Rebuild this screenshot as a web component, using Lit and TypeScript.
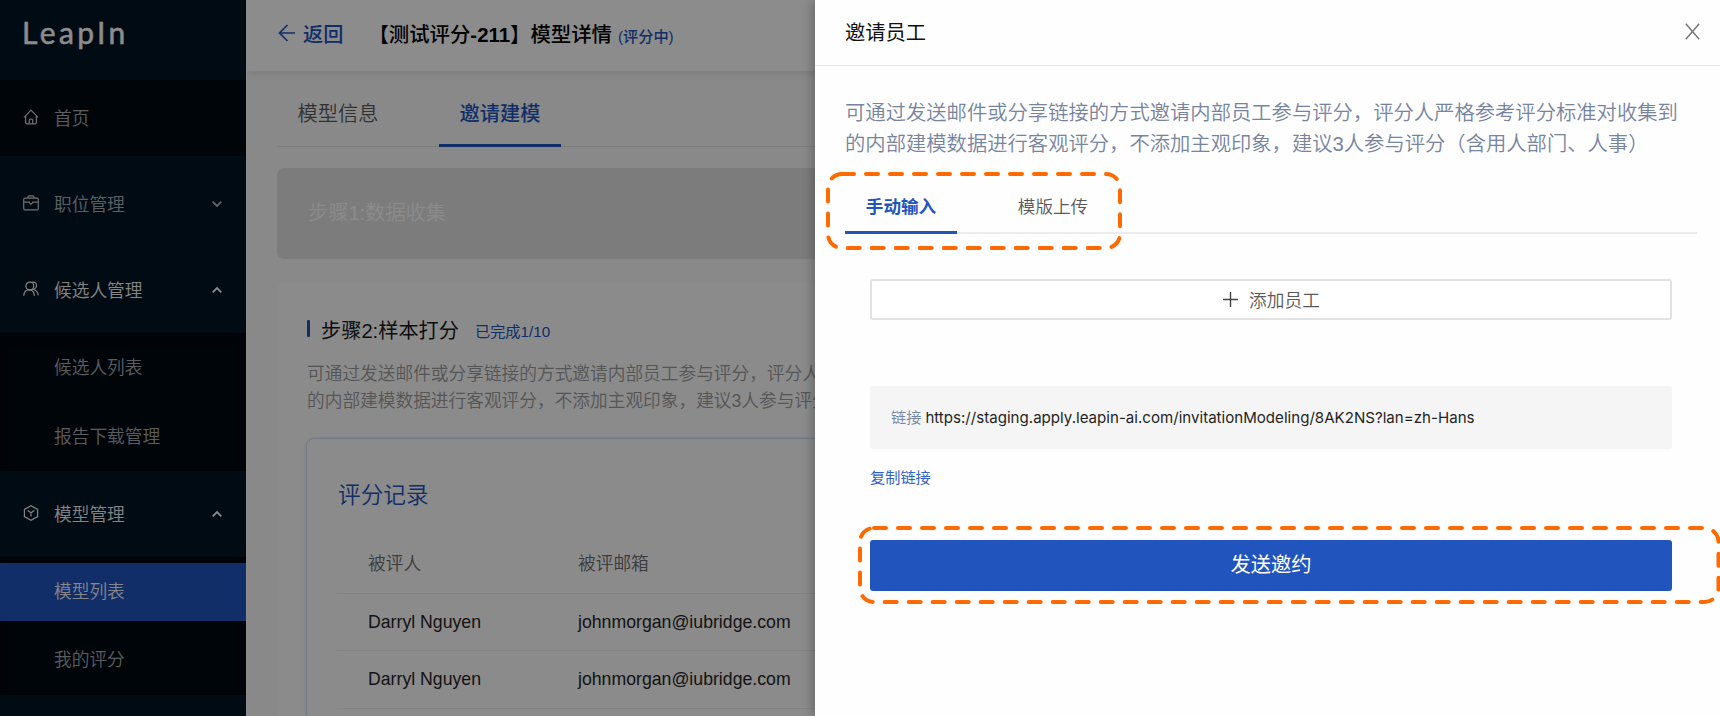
import { LitElement, html, css, svg } from "lit";
import { customElement } from "lit/decorators.js";
import { classMap } from "lit/directives/class-map.js";

const icons = {
  home: svg`<path d="M1 8.4 8 1.2l7 7.2M2.6 7v6.6q0 1.2 1.2 1.2h8.4q1.2 0 1.2-1.2V7M6.3 14.6v-3.4q0-1 1-1h1.4q1 0 1 1v3.4"/>`,
  brief: svg`<rect x=".7" y="3.1" width="14.6" height="11.8" rx="1.4"/><path d="M5 3V1.9Q5 .8 6 .8h4q1 0 1 1.1V3M.8 7.2h5.4M9.8 7.2h5.4M6.2 6.4v1.2L8 9.2l1.8-1.6V6.4"/>`,
  people: svg`<circle cx="6.8" cy="5" r="3.9"/><path d="M.7 14.8C1 11.2 3 8.9 6.3 8.9c3 0 4.700 2.300 5.100 5.900M9 1.300c3-.9 4.800 1.300 4.500 3.700-.2 1.700-1.400 2.900-2.900 3.500 2.700.7 4.300 2.800 4.700 5.800"/>`,
  cube: svg`<path d="M8 .8 14.600 4.400v7.200L8 15.200 1.400 11.600V4.400ZM4.600 5.600 8 7.800l3.400-2.200M8 7.800v3.700"/>`,
};

interface Group {
  icon: keyof typeof icons;
  label: string;
  open: boolean;
  children: string[];
}

const groups: Group[] = [
  { icon: "brief", label: "职位管理", open: false, children: [] },
  { icon: "people", label: "候选人管理", open: true, children: ["候选人列表", "报告下载管理"] },
  { icon: "cube", label: "模型管理", open: true, children: ["模型列表", "我的评分"] },
];

@customElement("side-nav")
export class SideNav extends LitElement {
  static styles = css`
    :host { display: block; width: 246px; flex: none; background: #001523; color: #fff; font-size: 17.7px; overflow: hidden; }
    .logo { height: 80px; box-sizing: border-box; padding: 12px 0 0 22px; font: 400 30px/40px Lato, sans-serif; letter-spacing: 3.4px; color: #fff; -webkit-text-stroke: 0.5px #fff; }
    .item { display: flex; align-items: center; gap: 15px; height: 86px; padding: 0 24px 0 23px; }
    .home { height: 76px; margin-bottom: 5px; background: #000a13; }
    .label { flex: 1; opacity: 0.66; padding-bottom: 2px; }
    .open .label, .open .icon { opacity: 0.95; }
    .icon { width: 16px; height: 16px; margin-bottom: 2px; fill: none; stroke: #fff; stroke-width: 1.2; opacity: 0.8; }
    .arrow { width: 10px; height: 6px; fill: none; stroke: #fff; stroke-width: 1.8; opacity: 0.7; }
    .open .arrow { transform: rotate(180deg); opacity: 1; }
    .sub { display: flex; flex-direction: column; gap: 10px; padding: 6px 0 4.800px; background: #000a13; box-shadow: inset 0 5px 8px -2px rgba(0, 0, 0, 0.6); }
    .leaf { height: 58.500px; line-height: 58.500px; padding-left: 54px; color: rgba(255, 255, 255, 0.66); }
    .on { background: #2155bd; color: rgba(255, 255, 255, 0.95); }
  `;
  render() {
    return html`
      <div class="logo">LeapIn</div>
      <div class="item home"><svg class="icon" viewBox="0 0 16 16">${icons.home}</svg><span class="label">首页</span></div>
      ${groups.map(
        (g) => html`
          <div class=${classMap({ item: true, open: g.open })}>
            <svg class="icon" viewBox="0 0 16 16">${icons[g.icon]}</svg>
            <span class="label">${g.label}</span>
            <svg class="arrow" viewBox="0 0 10 6"><path d="M.7.7 5 5 9.300.7" /></svg>
          </div>
          ${g.children.length
            ? html`<div class="sub">
                ${g.children.map((c) => html`<div class=${classMap({ leaf: true, on: c === "模型列表" })}>${c}</div>`)}
              </div>`
            : ""}
        `
      )}
    `;
  }
}

const people = [
  ["Darryl Nguyen", "johnmorgan@iubridge.com"],
  ["Darryl Nguyen", "johnmorgan@iubridge.com"],
];

@customElement("model-page")
export class ModelPage extends LitElement {
  static styles = css`
    :host { display: block; flex: 1; min-width: 0; background: #f9f9f9; overflow: hidden; border-left: 1px solid #fff; box-sizing: border-box; }
    .head { display: flex; align-items: center; height: 71px; box-sizing: border-box; padding: 0 0 5px 31px; background: #fff; box-shadow: 0 2px 8px rgba(0, 0, 0, 0.1); font-size: 20.2px; white-space: nowrap; }
    .back { display: flex; align-items: center; gap: 7px; color: #2155bd; font-weight: 500; }
    .back svg { width: 18px; height: 18px; fill: none; stroke: #2155bd; stroke-width: 1.7; }
    .title { margin-left: 25px; font-size: 20.4px; font-weight: 500; color: #000; }
    .title b { font-weight: 700; }
    .state { margin: 4px 0 0 6px; font-size: 15.2px; font-weight: 500; color: #2155bd; }
    .body { padding-left: 30px; }
    .tabs { display: flex; height: 75px; border-bottom: 1px solid #e6e6e6; font-size: 20.2px; line-height: 86px; color: #595959; }
    .tab { width: 122px; text-align: center; height: 73px; }
    .tab + .tab { margin-left: 40px; }
    .active { color: #2155bd; font-weight: 500; border-bottom: 3px solid #2155bd; }
    .step1 { margin-top: 21px; height: 91px; line-height: 91px; padding-left: 31px; border-radius: 7px; background: #e2e2e2; color: #fdfdfd; font-size: 20.2px; }
    .card { margin-top: 24px; padding: 33px 0 0 29px; height: 440px; background: #fdfdfd; border-radius: 7px 0 0 0; }
    .step2 { display: flex; align-items: center; height: 26px; margin-bottom: 2px; padding-left: 1px; font-size: 20.2px; font-weight: 400; color: #1a1a1a; }
    .bar { width: 3px; height: 17px; margin: 0 11px 1px 0; border-radius: 1px; background: #2155bd; }
    .done { margin: 2px 0 0 16px; font-size: 15.2px; color: #2155bd; }
    .desc { margin-top: 19px; padding-left: 1px; width: 760px; font-size: 17.7px; line-height: 26.8px; color: #9c9c9c; white-space: nowrap; }
    .records { margin-top: 23px; height: 400px; padding: 32px 0 0 30px; border: 1px solid #cfdcf3; border-radius: 8px; box-shadow: 0 0 3px rgba(33, 85, 189, 0.18); }
    .rtitle { font-size: 22.7px; line-height: 48px; color: #2155bd; padding-left: 1px; }
    .row { display: grid; grid-template-columns: 210px 1fr; padding-left: 31px; height: 56.700px; line-height: 56.700px; border-bottom: 1px solid #efefef; font-size: 17.7px; color: #262626; }
    .th { margin-top: 17px; height: 57px; color: #6c6c6c; }
  `;
  render() {
    return html`
      <div class="head">
        <div class="back"><svg viewBox="0 0 18 18"><path d="M17 9H1.500M9.500 1 1.500 9l8 8" /></svg>返回</div>
        <div class="title">【测试评分<b>-211</b>】模型详情</div>
        <div class="state">(评分中)</div>
      </div>
      <div class="body">
        <div class="tabs"><div class="tab">模型信息</div><div class="tab active">邀请建模</div></div>
        <div class="step1">步骤1:数据收集</div>
        <div class="card">
          <div class="step2"><span class="bar"></span>步骤2:样本打分<span class="done">已完成1/10</span></div>
          <div class="desc">可通过发送邮件或分享链接的方式邀请内部员工参与评分，评分人严格参考评分标准对收集到<br />的内部建模数据进行客观评分，不添加主观印象，建议3人参与评分（含用人部门、人事）</div>
          <div class="records">
            <div class="rtitle">评分记录</div>
            <div class="row th"><span>被评人</span><span>被评邮箱</span></div>
            ${people.map((p) => html`<div class="row"><span>${p[0]}</span><span>${p[1]}</span></div>`)}
          </div>
        </div>
      </div>
    `;
  }
}

@customElement("invite-drawer")
export class InviteDrawer extends LitElement {
  static styles = css`
    :host { display: block; box-sizing: border-box; background: #fefefe; box-shadow: -3px 0 10px rgba(0, 0, 0, 0.24); }
    .head { display: flex; align-items: center; justify-content: space-between; height: 66px; box-sizing: border-box; padding: 0 20px 3px 30px; border-bottom: 1px solid #e6e6e6; font-size: 20.3px; font-weight: 400; color: #111; }
    .head svg { width: 15px; height: 17px; fill: none; stroke: #777; stroke-width: 1.500; }
    .body { padding: 32px 23px 0 30px; }
    .desc { font-size: 20.32px; line-height: 30.500px; color: #76849f; white-space: nowrap; }
    .tabs { display: flex; gap: 40px; height: 55px; margin-top: 20px; border-bottom: 2px solid #ececec; box-sizing: border-box; font-size: 17.6px; line-height: 56px; color: #595959; }
    .tab { width: 112px; height: 52px; text-align: center; }
    .active { color: #2155bd; font-weight: 700; border-bottom: 3px solid #2155bd; }
    .form { padding: 45px 25px 0; }
    .add { display: flex; align-items: center; justify-content: center; gap: 11px; height: 41px; box-sizing: border-box; padding: 0 0 1px 1px; border: 2px solid #e2e2e2; border-radius: 3px; background: #fff; font-size: 17.700px; color: #595959; }
    .add svg { width: 15px; height: 15px; margin-top: 1px; fill: none; stroke: #444; stroke-width: 1.400; }
    .link { margin-top: 66px; height: 63px; line-height: 63px; padding-left: 21px; border-radius: 3px; background: #f5f5f5; font-size: 15.200px; color: #76849f; }
    .url { margin-left: 4px; font-family: Inter, sans-serif; font-weight: 400; font-size: 15.1px; color: #1f1f1f; }
    .copy { margin-top: 17px; line-height: 24px; font-size: 15.200px; font-weight: 400; color: #2f63c8; }
    .send { margin-top: 49.500px; height: 51px; line-height: 51px; border-radius: 3px; background: #2155bd; color: #fff; font-size: 20.300px; font-weight: 400; text-align: center; }
  `;
  render() {
    return html`
      <div class="head">邀请员工<svg viewBox="0 0 15 17"><path d="M.8.8 14.200 16.200M14.200.8.8 16.200" /></svg></div>
      <div class="body">
        <div class="desc">可通过发送邮件或分享链接的方式邀请内部员工参与评分，评分人严格参考评分标准对收集到<br />的内部建模数据进行客观评分，不添加主观印象，建议3人参与评分（含用人部门、人事）</div>
        <div class="tabs"><div class="tab active">手动输入</div><div class="tab">模版上传</div></div>
        <div class="form">
          <div class="add"><svg viewBox="0 0 15 15"><path d="M7.500 0v15M0 7.500h15" /></svg>添加员工</div>
          <div class="link">链接<span class="url">https://staging.apply.leapin-ai.com/invitationModeling/8AK2NS?lan=zh-Hans</span></div>
          <div class="copy">复制链接</div>
          <div class="send">发送邀约</div>
        </div>
      </div>
    `;
  }
}

@customElement("app-root")
export class AppRoot extends LitElement {
  static styles = css`
    :host { display: block; position: relative; width: 1720px; height: 716px; overflow: hidden; font-family: "Liberation Sans", "Noto Sans CJK SC", sans-serif; font-weight: 350; }
    .page { display: flex; height: 716px; }
    .mask { position: absolute; inset: 0; background: rgba(0, 0, 0, 0.45); }
    .drawer { position: absolute; top: 0; right: 0; bottom: 0; width: 905px; }
    .marks { position: absolute; inset: 0; width: 1720px; height: 716px; fill: none; stroke: #ff6a00; stroke-width: 4; stroke-dasharray: 12 12; stroke-linecap: round; }
  `;
  render() {
    return html`
      <div class="page"><side-nav></side-nav><model-page></model-page></div>
      <div class="mask"></div>
      <invite-drawer class="drawer"></invite-drawer>
      <svg class="marks" viewBox="0 0 1720 716">
        <rect x="828" y="174" width="292" height="74" rx="14" />
        <rect x="860" y="528" width="858.5" height="74" rx="14" />
      </svg>
    `;
  }
}
